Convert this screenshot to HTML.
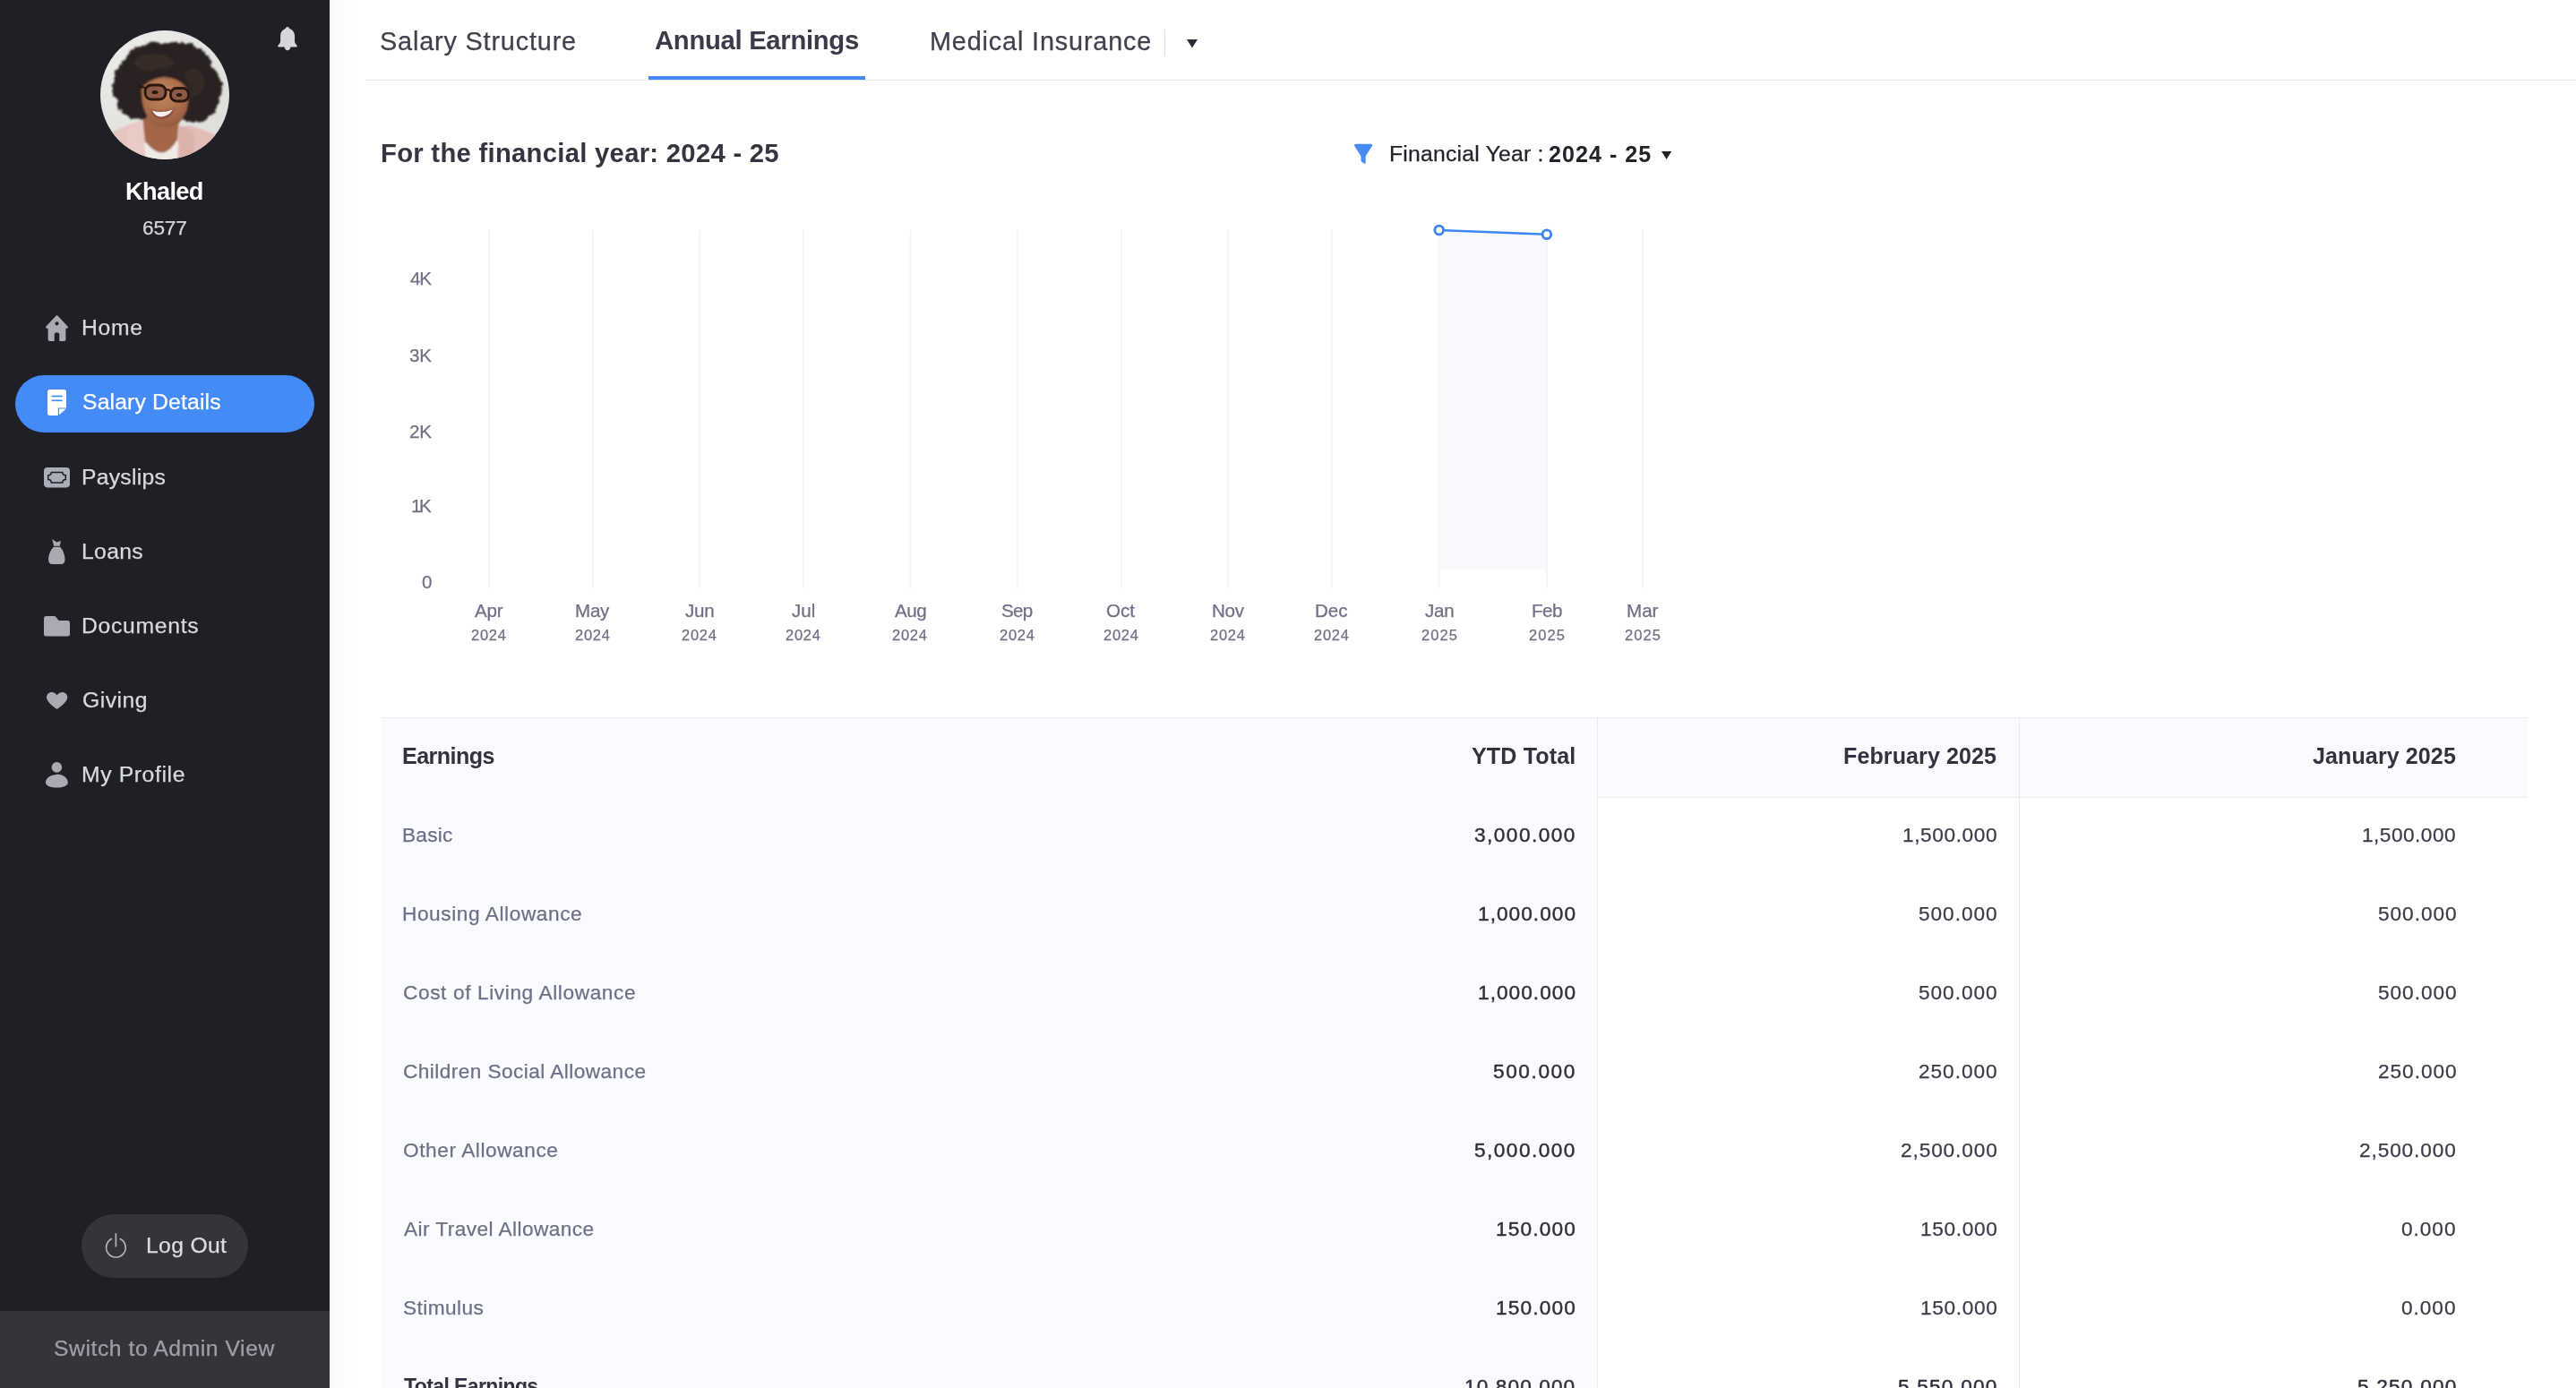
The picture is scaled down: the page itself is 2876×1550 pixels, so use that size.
<!DOCTYPE html>
<html lang="en"><head><meta charset="utf-8"><title>Annual Earnings</title>
<style>
*{box-sizing:border-box;margin:0;padding:0}
html,body{width:2876px;height:1550px;overflow:hidden;background:#fff;font-family:"Liberation Sans",Arial,sans-serif}
.a{position:absolute}
.t{position:absolute;will-change:transform;white-space:nowrap;font-family:"Liberation Sans",Arial,sans-serif}
#sidebar{position:absolute;left:0;top:0;width:368px;height:1550px;background:#1f2026}
#shade{position:absolute;left:368px;top:0;width:40px;height:1550px;background:linear-gradient(90deg,#f8f8f8 0,#fbfbfb 10px,#ffffff 28px)}
#pill{position:absolute;left:17px;top:419px;width:334px;height:64px;border-radius:32px;background:#448bf7}
#logout{position:absolute;left:91px;top:1356px;width:186px;height:71px;border-radius:36px;background:#34353a}
#switch{position:absolute;left:0;top:1464px;width:368px;height:86px;background:#34353b}
svg{position:absolute;overflow:visible}

</style></head>
<body>
<div id="sidebar">
  <div id="pill"></div>
  <div id="logout"></div>
  <div id="switch"></div>
  <!-- avatar -->
  <svg style="left:112px;top:34px" width="144" height="144" viewBox="0 0 144 144">
    <defs>
      <clipPath id="avc"><circle cx="72" cy="72" r="72"/></clipPath>
      <filter id="bl" x="-10%" y="-10%" width="120%" height="120%"><feGaussianBlur stdDeviation="1.3"/></filter>
      <filter id="bl2" x="-10%" y="-10%" width="120%" height="120%"><feGaussianBlur stdDeviation="0.7"/></filter>
      <filter id="curl" x="-15%" y="-15%" width="130%" height="130%">
        <feTurbulence type="fractalNoise" baseFrequency="0.16" numOctaves="2" seed="7" result="n"/>
        <feDisplacementMap in="SourceGraphic" in2="n" scale="8" xChannelSelector="R" yChannelSelector="G"/>
        <feGaussianBlur stdDeviation="1.1"/>
      </filter>
      <radialGradient id="bgg" cx="0.35" cy="0.3" r="0.9"><stop offset="0" stop-color="#efefed"/><stop offset="1" stop-color="#dcdad7"/></radialGradient>
      <radialGradient id="skin" cx="0.45" cy="0.35" r="0.75"><stop offset="0" stop-color="#bf875f"/><stop offset="0.6" stop-color="#a96b49"/><stop offset="1" stop-color="#8a5238"/></radialGradient>
    </defs>
    <g clip-path="url(#avc)">
      <rect width="144" height="144" fill="url(#bgg)"/>
      <g filter="url(#bl)">
        <!-- jacket -->
        <path d="M2 120 Q20 108 46 101 L58 150 L-4 150 Z" fill="#e6c5bf"/>
        <path d="M146 128 Q128 114 100 106 L88 108 L84 150 L146 150 Z" fill="#e2bdb6"/>
        <!-- shirt -->
        <path d="M36 150 L40 126 L92 124 L100 150 Z" fill="#f1ebe8"/>
        <!-- neck -->
        <path d="M47 96 L88 98 L86 122 Q70 150 50 124 Z" fill="#a3664a"/>
        <!-- lapels -->
        <path d="M30 110 L46 101 L52 150 L30 150 Z" fill="#e9cbc6"/>
        <path d="M104 112 L88 106 L86 150 L106 150 Z" fill="#dcb3ac"/>
      </g>
      <!-- hair -->
      <g filter="url(#curl)">
        <path d="M72 14 C98 9 120 22 125 40 C137 50 139 72 129 86 C126 98 112 106 101 101 C92 98 52 99 47 97 C35 102 22 94 20 82 C10 68 12 48 24 38 C30 22 50 11 72 14 Z" fill="#2b2421"/>
      </g>
      <g filter="url(#bl)">
        <ellipse cx="60" cy="36" rx="22" ry="10" fill="#3a2f2a" opacity="0.7"/>
        <ellipse cx="104" cy="58" rx="12" ry="16" fill="#3a2f2a" opacity="0.6"/>
        <!-- face -->
        <path d="M46 72 Q44 54 68 52 Q95 52 98 72 Q100 90 89 102 Q74 113 59 104 Q46 92 46 72 Z" fill="url(#skin)"/>
        <!-- hair fringe over forehead -->
        <path d="M42 74 Q48 54 72 52 Q92 53 101 72 Q100 44 72 42 Q44 42 42 74 Z" fill="#2b2421"/>
        <!-- mouth -->
        <path d="M56 88 Q68 93 83 87 Q80 98 68 99 Q58 98 56 88 Z" fill="#8c4a3b"/>
      </g>
      <g filter="url(#bl2)">
        <!-- lenses -->
        <rect x="50" y="61" width="23" height="16" rx="7" fill="#8c5a44" stroke="#2a1811" stroke-width="2.800"/>
        <rect x="78.500" y="64.500" width="20" height="14.500" rx="6.500" fill="#8c5a44" stroke="#2a1811" stroke-width="2.800"/>
        <path d="M73 66.500 Q76 65.500 78.500 68" stroke="#2a1811" stroke-width="2.200" fill="none"/>
        <path d="M50 64 L42 62" stroke="#2a1811" stroke-width="2"/>
        <ellipse cx="61" cy="69" rx="3.500" ry="2" fill="#2a1811"/>
        <ellipse cx="88" cy="72" rx="3.200" ry="1.900" fill="#2a1811"/>
        <!-- teeth -->
        <path d="M58 89.500 Q68 93 81 88.500 Q76 96 68 96.500 Q61 96 58 89.500 Z" fill="#f6f1ee"/>
      </g>
    </g>
  </svg>
  <!-- bell -->
  <svg style="left:309.750px;top:29.700px" width="22" height="26.300" viewBox="0 0 22 26.300"><path d="M11 0 C12.200 0 13 0.800 13.200 2 C16.600 3 19 6.200 19 10 V15.500 C19 17.500 19.800 18.800 21.400 20.600 C22.200 21.500 21.800 22.400 20.800 22.400 H14.400 C14.200 24.600 12.800 26.300 11 26.300 C9.200 26.300 7.800 24.600 7.600 22.400 H1.200 C0.200 22.400 -0.200 21.500 0.600 20.600 C2.200 18.800 3.100 17.500 3.100 15.500 V10 C3.100 6.200 5.400 3 8.800 2 C9 0.800 9.800 0 11 0 Z" fill="#d5d6dc"/></svg>
  <!-- home -->
  <svg style="left:51px;top:352px" width="25" height="29" viewBox="0 0 25 29"><path fill-rule="evenodd" d="M11.700 0.400 Q12.500 -0.300 13.300 0.400 L24.600 12.600 Q25.400 13.600 24.600 14.300 Q24 14.800 22.500 14.800 L22.400 14.800 L22.400 27 Q22.400 29 20.400 29 L15.300 29 L15.300 22 Q15.300 19.200 12.500 19.200 Q9.700 19.200 9.700 22 L9.700 29 L4.600 29 Q2.600 29 2.600 27 L2.600 14.800 L2.500 14.800 Q1 14.800 0.400 14.300 Q-0.400 13.600 0.400 12.600 Z M12.500 7.200 a2.100 2.100 0 1 0 0.010 0 Z" fill="#a9aab4"/></svg>
  <!-- salary doc -->
  <svg style="left:53px;top:435px" width="21" height="29" viewBox="0 0 21 29"><path d="M2.500 0 H18.500 Q21 0 21 2.500 V20.400 H11.800 V29 H2.500 Q0 29 0 26.500 V2.500 Q0 0 2.500 0 Z" fill="#fff"/><path d="M13 21.600 H20.800 L13 28.200 Z" fill="#fff"/><rect x="4.600" y="6.600" width="12" height="1.700" fill="#448bf7"/><rect x="4.600" y="11.400" width="12" height="1.700" fill="#448bf7"/></svg>
  <!-- payslips -->
  <svg style="left:49px;top:522px" width="29" height="22.400" viewBox="0 0 29 22.400"><rect width="29" height="22.400" rx="3.800" fill="#abadb8"/><path d="M8.300 5.500 H20.800 Q20.800 8.700 24.300 8.700 V13.600 Q20.800 13.600 20.800 16.900 H8.300 Q8.300 13.600 4.800 13.600 V8.700 Q8.300 8.700 8.300 5.500 Z" fill="none" stroke="#1e1f26" stroke-width="1.500" stroke-linejoin="miter"/></svg>
  <!-- loans -->
  <svg style="left:54px;top:602px" width="19" height="28" viewBox="0 0 19 28"><path d="M4.200 0 L9.200 3.400 L14 1.900 L12.700 7.700 H6.200 Z M5.900 8.800 H13 C16 11.500 18.500 17.500 18.500 23 C18.500 26.500 16.800 28 14.400 28 H4.200 C1.800 28 0.100 26.500 0.100 23 C0.100 17.500 2.800 11.500 5.900 8.800 Z" fill="#a9aab4"/></svg>
  <!-- folder -->
  <svg style="left:49px;top:688px" width="29" height="22.500" viewBox="0 0 29 22.500"><path d="M2.500 0 H11 Q12.600 0 13.600 1.200 L16.600 5 H26.500 Q29 5 29 7.500 V20 Q29 22.500 26.500 22.500 H2.500 Q0 22.500 0 20 V2.500 Q0 0 2.500 0 Z" fill="#a9aab4"/></svg>
  <!-- heart -->
  <svg style="left:52px;top:773px" width="23.300" height="19" viewBox="0 0 23.300 19"><path d="M11.650 19 C11.650 19 0 11.500 0 5.800 C0 2.300 2.600 0 5.700 0 C8.200 0 10.400 1.400 11.650 3.400 C12.900 1.400 15.100 0 17.600 0 C20.700 0 23.300 2.300 23.300 5.800 C23.300 11.500 11.650 19 11.650 19 Z" fill="#a9aab4"/></svg>
  <!-- profile -->
  <svg style="left:51px;top:851px" width="25" height="29" viewBox="0 0 25 29"><circle cx="12.400" cy="5.900" r="5.800" fill="#a9aab4"/><path d="M12.400 13.600 C19.500 13.600 24.800 18 24.800 23 C24.800 26.500 19.500 28.600 12.400 28.600 C5.300 28.600 0 26.500 0 23 C0 18 5.300 14 12.400 14 Z" fill="#a9aab4"/></svg>
  <!-- power -->
  <svg style="left:117px;top:1377px" width="25" height="28" viewBox="0 0 25 28"><path d="M7.500 6.600 A10.800 10.800 0 1 0 17.300 6.600" fill="none" stroke="#b4b5bc" stroke-width="1.700" stroke-linecap="round"/><path d="M12.400 0.800 V14.700" stroke="#b4b5bc" stroke-width="1.700" stroke-linecap="round"/></svg>
</div>
<div id="shade"></div>

<!-- tabs -->
<div class="a" style="left:408px;top:89px;width:2468px;height:1px;background:#ebebef"></div>
<div class="a" style="left:724px;top:85px;width:242px;height:4px;background:#448bf7"></div>
<div class="a" style="left:1300px;top:33px;width:1px;height:29px;background:#dcdce2"></div>
<svg style="left:1325px;top:43.500px" width="12" height="9.500" viewBox="0 0 12 9.500"><path d="M0 0 H12 L6 9.500 Z" fill="#2b2b36"/></svg>

<!-- filter -->
<svg style="left:0;top:0" width="1600" height="200" viewBox="0 0 1600 200"><path d="M1514.200 160.800 H1530 Q1533.200 160.800 1531.600 163.600 L1524.700 174.200 V181.200 Q1524.700 183.400 1522.900 182.400 L1520.300 180.700 Q1519.500 180.100 1519.500 179.100 V174.600 L1512.600 163.600 Q1511 160.800 1514.200 160.800 Z" fill="#468cf6"/></svg>
<svg style="left:1854.700px;top:169px" width="11.200" height="9" viewBox="0 0 11.200 9"><path d="M0 0 H11.200 L5.600 9 Z" fill="#23242b"/></svg>

<!-- chart -->
<svg style="left:0;top:0" width="2876" height="760" viewBox="0 0 2876 760">
  <g stroke="#f2f2f5" stroke-width="1.500">
    <path d="M546 257V657M661.700 257V657M781.200 257V657M896.900 257V657M1016.400 257V657M1136 257V657M1251.700 257V657M1371.200 257V657M1486.900 257V657M1606.600 257V657M1727 257V657M1834 257V657"/>
  </g>
  <path d="M1607.400 257 L1726.200 261.600 L1726.200 636 L1607.400 636 Z" fill="#f9fafe"/>
  <path d="M1606.700 257 L1726.900 261.700" stroke="#3f86f5" stroke-width="2.500" fill="none"/>
  <circle cx="1606.700" cy="257" r="4.850" fill="#fff" stroke="#3f86f5" stroke-width="2.900"/>
  <circle cx="1726.900" cy="261.700" r="4.850" fill="#fff" stroke="#3f86f5" stroke-width="2.900"/>
</svg>

<!-- table -->
<div class="a" style="left:426px;top:801px;width:1357px;height:749px;background:#fafbfe"></div>
<div class="a" style="left:1783px;top:801px;width:1039px;height:89px;background:#fafbfe"></div>
<div class="a" style="left:426px;top:800.500px;width:2396px;height:1.500px;background:#ececf0"></div>
<div class="a" style="left:1783px;top:890px;width:1039px;height:1px;background:#ebebef"></div>
<div class="a" style="left:1783px;top:801px;width:1px;height:749px;background:#ebebef"></div>
<div class="a" style="left:2254px;top:801px;width:1px;height:749px;background:#ebebef"></div>

<div id="texts">
<span class="t" style="left:140.1px;top:200.1px;font-size:27.17px;line-height:27.17px;color:#ffffff;letter-spacing:-0.64px;font-weight:700;">Khaled</span>
<span class="t" style="left:158.6px;top:242.7px;font-size:22.66px;line-height:22.66px;color:#d6d7dd;letter-spacing:-0.20px;-webkit-text-stroke:0.25px #d6d7dd;">6577</span>
<span class="t" style="left:91.4px;top:354.2px;font-size:24.72px;line-height:24.72px;color:#d9dae0;letter-spacing:0.67px;-webkit-text-stroke:0.25px #d9dae0;">Home</span>
<span class="t" style="left:92.4px;top:437.2px;font-size:24.72px;line-height:24.72px;color:#ffffff;letter-spacing:0.16px;-webkit-text-stroke:0.25px #ffffff;">Salary Details</span>
<span class="t" style="left:91.4px;top:521.0px;font-size:24.72px;line-height:24.72px;color:#d9dae0;letter-spacing:0.26px;-webkit-text-stroke:0.25px #d9dae0;">Payslips</span>
<span class="t" style="left:91.4px;top:604.2px;font-size:24.72px;line-height:24.72px;color:#d9dae0;letter-spacing:0.32px;-webkit-text-stroke:0.25px #d9dae0;">Loans</span>
<span class="t" style="left:91.4px;top:687.2px;font-size:24.72px;line-height:24.72px;color:#d9dae0;letter-spacing:0.70px;-webkit-text-stroke:0.25px #d9dae0;">Documents</span>
<span class="t" style="left:92.4px;top:770.0px;font-size:24.72px;line-height:24.72px;color:#d9dae0;letter-spacing:0.50px;-webkit-text-stroke:0.25px #d9dae0;">Giving</span>
<span class="t" style="left:91.4px;top:853.0px;font-size:24.72px;line-height:24.72px;color:#d9dae0;letter-spacing:0.61px;-webkit-text-stroke:0.25px #d9dae0;">My Profile</span>
<span class="t" style="left:163.0px;top:1378.6px;font-size:24.72px;line-height:24.72px;color:#dcdde2;letter-spacing:0.33px;-webkit-text-stroke:0.25px #dcdde2;">Log Out</span>
<span class="t" style="left:60.2px;top:1494.4px;font-size:24.72px;line-height:24.72px;color:#9fa0a7;letter-spacing:0.55px;-webkit-text-stroke:0.25px #9fa0a7;">Switch to Admin View</span>
<span class="t" style="left:424.2px;top:31.8px;font-size:28.84px;line-height:28.84px;color:#40404f;letter-spacing:0.83px;-webkit-text-stroke:0.25px #40404f;">Salary Structure</span>
<span class="t" style="left:731.0px;top:31.3px;font-size:29.26px;line-height:29.26px;color:#3a3a48;letter-spacing:-0.30px;font-weight:700;">Annual Earnings</span>
<span class="t" style="left:1038.0px;top:31.8px;font-size:28.84px;line-height:28.84px;color:#40404f;letter-spacing:0.84px;-webkit-text-stroke:0.25px #40404f;">Medical Insurance</span>
<span class="t" style="left:424.6px;top:156.7px;font-size:29.26px;line-height:29.26px;color:#353541;letter-spacing:0.28px;font-weight:700;">For the financial year: 2024 - 25</span>
<span class="t" style="left:1550.9px;top:159.9px;font-size:24.72px;line-height:24.72px;color:#23242b;letter-spacing:0.23px;-webkit-text-stroke:0.25px #23242b;">Financial Year :</span>
<span class="t" style="left:1729.0px;top:159.6px;font-size:25.08px;line-height:25.08px;color:#23242b;letter-spacing:1.04px;font-weight:700;">2024 - 25</span>
<span class="t" style="left:457.8px;top:301.4px;font-size:20.6px;line-height:20.6px;color:#6f6f86;letter-spacing:-1.10px;-webkit-text-stroke:0.25px #6f6f86;">4K</span>
<span class="t" style="left:456.8px;top:387.0px;font-size:20.6px;line-height:20.6px;color:#6f6f86;letter-spacing:-0.10px;-webkit-text-stroke:0.25px #6f6f86;">3K</span>
<span class="t" style="left:456.8px;top:471.8px;font-size:20.6px;line-height:20.6px;color:#6f6f86;letter-spacing:-0.10px;-webkit-text-stroke:0.25px #6f6f86;">2K</span>
<span class="t" style="left:459.2px;top:555.4px;font-size:20.6px;line-height:20.6px;color:#6f6f86;letter-spacing:-2.50px;-webkit-text-stroke:0.25px #6f6f86;">1K</span>
<span class="t" style="left:470.7px;top:639.8px;font-size:20.6px;line-height:20.6px;color:#6f6f86;letter-spacing:1.40px;-webkit-text-stroke:0.25px #6f6f86;">0</span>
<span class="t" style="left:530.2px;top:671.7px;font-size:20.6px;line-height:20.6px;color:#6f6f86;letter-spacing:-0.20px;-webkit-text-stroke:0.25px #6f6f86;">Apr</span>
<span class="t" style="left:525.9px;top:701.2px;font-size:16.48px;line-height:16.48px;color:#6f6f86;letter-spacing:0.73px;-webkit-text-stroke:0.25px #6f6f86;">2024</span>
<span class="t" style="left:642.0px;top:671.7px;font-size:20.6px;line-height:20.6px;color:#6f6f86;letter-spacing:-0.25px;-webkit-text-stroke:0.25px #6f6f86;">May</span>
<span class="t" style="left:641.6px;top:701.2px;font-size:16.48px;line-height:16.48px;color:#6f6f86;letter-spacing:0.73px;-webkit-text-stroke:0.25px #6f6f86;">2024</span>
<span class="t" style="left:765.4px;top:671.7px;font-size:20.6px;line-height:20.6px;color:#6f6f86;letter-spacing:-0.20px;-webkit-text-stroke:0.25px #6f6f86;">Jun</span>
<span class="t" style="left:761.1px;top:701.2px;font-size:16.48px;line-height:16.48px;color:#6f6f86;letter-spacing:0.73px;-webkit-text-stroke:0.25px #6f6f86;">2024</span>
<span class="t" style="left:884.4px;top:671.7px;font-size:20.6px;line-height:20.6px;color:#6f6f86;-webkit-text-stroke:0.25px #6f6f86;">Jul</span>
<span class="t" style="left:876.8px;top:701.2px;font-size:16.48px;line-height:16.48px;color:#6f6f86;letter-spacing:0.73px;-webkit-text-stroke:0.25px #6f6f86;">2024</span>
<span class="t" style="left:998.9px;top:671.7px;font-size:20.6px;line-height:20.6px;color:#6f6f86;letter-spacing:-0.50px;-webkit-text-stroke:0.25px #6f6f86;">Aug</span>
<span class="t" style="left:996.3px;top:701.2px;font-size:16.48px;line-height:16.48px;color:#6f6f86;letter-spacing:0.73px;-webkit-text-stroke:0.25px #6f6f86;">2024</span>
<span class="t" style="left:1118.2px;top:671.7px;font-size:20.6px;line-height:20.6px;color:#6f6f86;letter-spacing:-0.75px;-webkit-text-stroke:0.25px #6f6f86;">Sep</span>
<span class="t" style="left:1115.9px;top:701.2px;font-size:16.48px;line-height:16.48px;color:#6f6f86;letter-spacing:0.73px;-webkit-text-stroke:0.25px #6f6f86;">2024</span>
<span class="t" style="left:1235.2px;top:671.7px;font-size:20.6px;line-height:20.6px;color:#6f6f86;-webkit-text-stroke:0.25px #6f6f86;">Oct</span>
<span class="t" style="left:1231.6px;top:701.2px;font-size:16.48px;line-height:16.48px;color:#6f6f86;letter-spacing:0.73px;-webkit-text-stroke:0.25px #6f6f86;">2024</span>
<span class="t" style="left:1352.5px;top:671.7px;font-size:20.6px;line-height:20.6px;color:#6f6f86;letter-spacing:-0.25px;-webkit-text-stroke:0.25px #6f6f86;">Nov</span>
<span class="t" style="left:1351.1px;top:701.2px;font-size:16.48px;line-height:16.48px;color:#6f6f86;letter-spacing:0.73px;-webkit-text-stroke:0.25px #6f6f86;">2024</span>
<span class="t" style="left:1468.4px;top:671.7px;font-size:20.6px;line-height:20.6px;color:#6f6f86;-webkit-text-stroke:0.25px #6f6f86;">Dec</span>
<span class="t" style="left:1466.8px;top:701.2px;font-size:16.48px;line-height:16.48px;color:#6f6f86;letter-spacing:0.73px;-webkit-text-stroke:0.25px #6f6f86;">2024</span>
<span class="t" style="left:1590.8px;top:671.7px;font-size:20.6px;line-height:20.6px;color:#6f6f86;letter-spacing:-0.25px;-webkit-text-stroke:0.25px #6f6f86;">Jan</span>
<span class="t" style="left:1586.5px;top:701.2px;font-size:16.48px;line-height:16.48px;color:#6f6f86;letter-spacing:1.07px;-webkit-text-stroke:0.25px #6f6f86;">2025</span>
<span class="t" style="left:1709.5px;top:671.7px;font-size:20.6px;line-height:20.6px;color:#6f6f86;letter-spacing:-0.50px;-webkit-text-stroke:0.25px #6f6f86;">Feb</span>
<span class="t" style="left:1706.9px;top:701.2px;font-size:16.48px;line-height:16.48px;color:#6f6f86;letter-spacing:1.07px;-webkit-text-stroke:0.25px #6f6f86;">2025</span>
<span class="t" style="left:1816.0px;top:671.7px;font-size:20.6px;line-height:20.6px;color:#6f6f86;-webkit-text-stroke:0.25px #6f6f86;">Mar</span>
<span class="t" style="left:1813.9px;top:701.2px;font-size:16.48px;line-height:16.48px;color:#6f6f86;letter-spacing:1.07px;-webkit-text-stroke:0.25px #6f6f86;">2025</span>
<span class="t" style="left:448.8px;top:831.6px;font-size:25.08px;line-height:25.08px;color:#33333f;letter-spacing:-0.54px;font-weight:700;">Earnings</span>
<span class="t" style="left:1642.9px;top:831.6px;font-size:25.08px;line-height:25.08px;color:#33333f;letter-spacing:0.14px;font-weight:700;">YTD Total</span>
<span class="t" style="left:2057.8px;top:831.6px;font-size:25.08px;line-height:25.08px;color:#33333f;letter-spacing:0.08px;font-weight:700;">February 2025</span>
<span class="t" style="left:2582.3px;top:831.6px;font-size:25.08px;line-height:25.08px;color:#33333f;letter-spacing:0.08px;font-weight:700;">January 2025</span>
<span class="t" style="left:449.2px;top:920.9px;font-size:22.66px;line-height:22.66px;color:#6f6f86;letter-spacing:0.25px;-webkit-text-stroke:0.25px #6f6f86;">Basic</span>
<span class="t" style="left:1646.2px;top:920.9px;font-size:22.66px;line-height:22.66px;color:#30303c;letter-spacing:1.45px;-webkit-text-stroke:0.45px #30303c;">3,000.000</span>
<span class="t" style="left:2124.1px;top:921.4px;font-size:22.66px;line-height:22.66px;color:#3b3b49;letter-spacing:0.59px;-webkit-text-stroke:0.25px #3b3b49;">1,500.000</span>
<span class="t" style="left:2637.4px;top:921.4px;font-size:22.66px;line-height:22.66px;color:#3b3b49;letter-spacing:0.47px;-webkit-text-stroke:0.25px #3b3b49;">1,500.000</span>
<span class="t" style="left:449.2px;top:1008.9px;font-size:22.66px;line-height:22.66px;color:#6f6f86;letter-spacing:0.58px;-webkit-text-stroke:0.25px #6f6f86;">Housing Allowance</span>
<span class="t" style="left:1649.6px;top:1008.9px;font-size:22.66px;line-height:22.66px;color:#30303c;letter-spacing:1.03px;-webkit-text-stroke:0.45px #30303c;">1,000.000</span>
<span class="t" style="left:2142.1px;top:1009.4px;font-size:22.66px;line-height:22.66px;color:#3b3b49;letter-spacing:0.95px;-webkit-text-stroke:0.25px #3b3b49;">500.000</span>
<span class="t" style="left:2654.5px;top:1009.4px;font-size:22.66px;line-height:22.66px;color:#3b3b49;letter-spacing:0.95px;-webkit-text-stroke:0.25px #3b3b49;">500.000</span>
<span class="t" style="left:450.2px;top:1096.9px;font-size:22.66px;line-height:22.66px;color:#6f6f86;letter-spacing:0.61px;-webkit-text-stroke:0.25px #6f6f86;">Cost of Living Allowance</span>
<span class="t" style="left:1649.6px;top:1096.9px;font-size:22.66px;line-height:22.66px;color:#30303c;letter-spacing:1.03px;-webkit-text-stroke:0.45px #30303c;">1,000.000</span>
<span class="t" style="left:2142.1px;top:1097.4px;font-size:22.66px;line-height:22.66px;color:#3b3b49;letter-spacing:0.95px;-webkit-text-stroke:0.25px #3b3b49;">500.000</span>
<span class="t" style="left:2654.5px;top:1097.4px;font-size:22.66px;line-height:22.66px;color:#3b3b49;letter-spacing:0.95px;-webkit-text-stroke:0.25px #3b3b49;">500.000</span>
<span class="t" style="left:450.2px;top:1184.9px;font-size:22.66px;line-height:22.66px;color:#6f6f86;letter-spacing:0.43px;-webkit-text-stroke:0.25px #6f6f86;">Children Social Allowance</span>
<span class="t" style="left:1667.3px;top:1184.9px;font-size:22.66px;line-height:22.66px;color:#30303c;letter-spacing:1.58px;-webkit-text-stroke:0.45px #30303c;">500.000</span>
<span class="t" style="left:2142.1px;top:1185.4px;font-size:22.66px;line-height:22.66px;color:#3b3b49;letter-spacing:0.95px;-webkit-text-stroke:0.25px #3b3b49;">250.000</span>
<span class="t" style="left:2654.5px;top:1185.4px;font-size:22.66px;line-height:22.66px;color:#3b3b49;letter-spacing:0.95px;-webkit-text-stroke:0.25px #3b3b49;">250.000</span>
<span class="t" style="left:450.2px;top:1272.9px;font-size:22.66px;line-height:22.66px;color:#6f6f86;letter-spacing:0.57px;-webkit-text-stroke:0.25px #6f6f86;">Other Allowance</span>
<span class="t" style="left:1646.2px;top:1272.9px;font-size:22.66px;line-height:22.66px;color:#30303c;letter-spacing:1.45px;-webkit-text-stroke:0.45px #30303c;">5,000.000</span>
<span class="t" style="left:2121.8px;top:1273.4px;font-size:22.66px;line-height:22.66px;color:#3b3b49;letter-spacing:0.88px;-webkit-text-stroke:0.25px #3b3b49;">2,500.000</span>
<span class="t" style="left:2634.2px;top:1273.4px;font-size:22.66px;line-height:22.66px;color:#3b3b49;letter-spacing:0.88px;-webkit-text-stroke:0.25px #3b3b49;">2,500.000</span>
<span class="t" style="left:451.2px;top:1360.9px;font-size:22.66px;line-height:22.66px;color:#6f6f86;letter-spacing:0.43px;-webkit-text-stroke:0.25px #6f6f86;">Air Travel Allowance</span>
<span class="t" style="left:1669.8px;top:1360.9px;font-size:22.66px;line-height:22.66px;color:#30303c;letter-spacing:1.17px;-webkit-text-stroke:0.45px #30303c;">150.000</span>
<span class="t" style="left:2143.9px;top:1361.4px;font-size:22.66px;line-height:22.66px;color:#3b3b49;letter-spacing:0.65px;-webkit-text-stroke:0.25px #3b3b49;">150.000</span>
<span class="t" style="left:2681.4px;top:1361.4px;font-size:22.66px;line-height:22.66px;color:#3b3b49;letter-spacing:0.95px;-webkit-text-stroke:0.25px #3b3b49;">0.000</span>
<span class="t" style="left:450.2px;top:1448.9px;font-size:22.66px;line-height:22.66px;color:#6f6f86;letter-spacing:0.43px;-webkit-text-stroke:0.25px #6f6f86;">Stimulus</span>
<span class="t" style="left:1669.8px;top:1448.9px;font-size:22.66px;line-height:22.66px;color:#30303c;letter-spacing:1.17px;-webkit-text-stroke:0.45px #30303c;">150.000</span>
<span class="t" style="left:2143.9px;top:1449.4px;font-size:22.66px;line-height:22.66px;color:#3b3b49;letter-spacing:0.65px;-webkit-text-stroke:0.25px #3b3b49;">150.000</span>
<span class="t" style="left:2681.4px;top:1449.4px;font-size:22.66px;line-height:22.66px;color:#3b3b49;letter-spacing:0.95px;-webkit-text-stroke:0.25px #3b3b49;">0.000</span>
<span class="t" style="left:451.0px;top:1536.7px;font-size:22.99px;line-height:22.99px;color:#33333f;letter-spacing:-0.60px;font-weight:700;">Total Earnings</span>
<span class="t" style="left:1635.0px;top:1536.9px;font-size:22.66px;line-height:22.66px;color:#30303c;letter-spacing:1.09px;-webkit-text-stroke:0.45px #30303c;">10,800.000</span>
<span class="t" style="left:2119.3px;top:1537.4px;font-size:22.66px;line-height:22.66px;color:#30303c;letter-spacing:1.19px;-webkit-text-stroke:0.45px #30303c;">5,550.000</span>
<span class="t" style="left:2631.7px;top:1537.4px;font-size:22.66px;line-height:22.66px;color:#30303c;letter-spacing:1.19px;-webkit-text-stroke:0.45px #30303c;">5,250.000</span>
</div>
</body></html>
